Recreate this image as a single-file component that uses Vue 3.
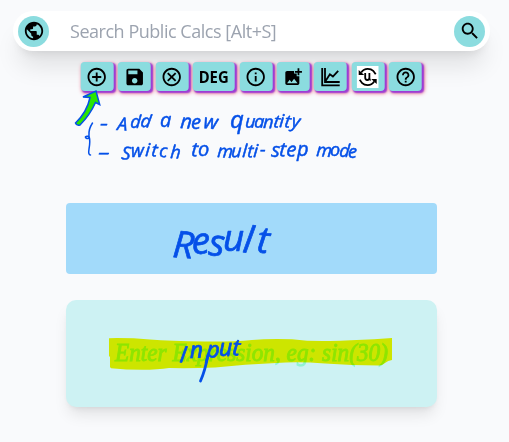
<script setup>
const circle = 'M12 2C6.48 2 2 6.48 2 12s4.48 10 10 10 10-4.48 10-10S17.52 2 12 2zm0 18c-4.41 0-8-3.59-8-8s3.59-8 8-8 8 3.59 8 8-3.59 8-8 8z'
const tools = [
  { name: 'add', path: 'M13 7h-2v4H7v2h4v4h2v-4h4v-2h-4z' + circle },
  { name: 'save', path: 'M17 3H5c-1.11 0-2 .9-2 2v14c0 1.1.89 2 2 2h14c1.1 0 2-.9 2-2V7l-4-4zm-5 16c-1.66 0-3-1.34-3-3s1.34-3 3-3 3 1.34 3 3-1.34 3-3 3zm3-10H5V5h10v4z' },
  { name: 'clear', path: 'M15.6 7L12 10.6 8.400 7 7 8.400l3.600 3.600L7 15.600 8.400 17l3.600-3.600 3.600 3.600 1.400-1.400-3.600-3.600L17 8.400z' + circle },
  { name: 'deg', label: 'DEG' },
  { name: 'info', path: 'M11 7h2v2h-2zm0 4h2v6h-2z' + circle },
  { name: 'image', path: 'M19 7v2.99s-1.99.01-2 0V7h-3s.01-1.99 0-2h3V2h2v3h3v2h-3zm-3 4V8h-3V5H5c-1.1 0-2 .9-2 2v12c0 1.1.9 2 2 2h12c1.1 0 2-.9 2-2v-8h-3zM5 19l3-4 2 3 3-4 4 5H5z' },
  { name: 'chart' },
  { name: 'unit' },
  { name: 'help', path: 'M11 16h2v2h-2zM12 6c-2.21 0-4 1.79-4 4h2c0-1.1.9-2 2-2s2 .9 2 2c0 2-3 1.75-3 5h2c0-2.25 3-2.5 3-5 0-2.21-1.79-4-4-4z' + circle }
]
</script>

<template>
  <main class="page">
    <header class="search">
      <button class="round">
        <svg width="22" height="22" viewBox="0 0 24 24"><path d="M12 2C6.48 2 2 6.48 2 12s4.48 10 10 10 10-4.48 10-10S17.52 2 12 2zm-1 17.93c-3.95-.49-7-3.85-7-7.93 0-.62.08-1.21.21-1.79L9 15v1c0 1.1.9 2 2 2v1.93zm6.9-2.54c-.26-.81-1-1.39-1.9-1.39h-1v-3c0-.55-.45-1-1-1H8v-2h2c.55 0 1-.45 1-1V7h2c1.1 0 2-.9 2-2v-.41c2.93 1.19 5 4.06 5 7.41 0 2.08-.8 3.97-2.1 5.39z" /></svg>
      </button>
      <span class="placeholder">Search Public Calcs [Alt+S]</span>
      <button class="round">
        <svg width="22" height="22" viewBox="0 0 24 24"><path d="M15.5 14h-.79l-.28-.27C15.41 12.59 16 11.11 16 9.5 16 5.91 13.09 3 9.5 3S3 5.91 3 9.5 5.91 16 9.5 16c1.61 0 3.09-.59 4.23-1.57l.27.28v.79l5 4.99L20.49 19l-4.99-5zm-6 0C7.01 14 5 11.99 5 9.5S7.01 5 9.5 5 14 7.01 14 9.5 11.99 14 9.5 14z" /></svg>
      </button>
    </header>

    <nav class="tools">
      <button v-for="t in tools" :key="t.name" class="tool" :class="t.name">
        <svg v-if="t.label" width="36" height="22" viewBox="0 0 36 22"><text x="3" y="17" textLength="30" lengthAdjust="spacingAndGlyphs">{{ t.label }}</text></svg>
        <svg v-else-if="t.name === 'chart'" width="22" height="22" viewBox="0 0 22 22" class="line">
          <path d="M2.500 2v17.300H20M5.300 2v14H20M5.500 15.500l4.700-7.200 3 2.200 5.300-5.700" />
        </svg>
        <svg v-else-if="t.name === 'unit'" width="22" height="22" viewBox="0 0 22 22" class="line">
          <rect width="22" height="22" class="tile" />
          <path d="M4.500 6.500Q7 2.800 11 2.800q3.600 0 5.500 2l2.500 3.500M17.500 15.500Q15 19.200 11 19.200q-3.600 0-5.500-2L3 13.700M8.500 7v4.500q0 2.500 2.100 2.500t2.100-2.500V7M12.700 12q.2 2 1.300 2" />
          <path d="M2 4v5h5.500zM20 18v-5h-5.500z" class="head" />
        </svg>
        <svg v-else width="22" height="22" viewBox="0 0 24 24"><path :d="t.path" /></svg>
      </button>
    </nav>

    <section class="result"></section>
    <section class="input"><span class="hint">
      <svg width="320" height="70" viewBox="0 0 320 70"><text x="23" y="41.500" textLength="273" lengthAdjust="spacingAndGlyphs">Enter Expression, eg: sin(30)</text></svg>
    </span></section>

    <svg class="ink marker" width="509" height="442" viewBox="0 0 509 442">
      <path d="M109 338.200Q130 337.800 150 339.500T205 341.500Q235 341.700 252 340T292 339.200Q310 341.500 330 341T374 339.200L392 338V360Q388 360.500 385 363T379 365.500Q352 365.500 325 363.500T276 363Q245 364 215 367.500Q190 368.500 169 368Q158 369.800 142 369.800T111 368.300L110 367V357L109 356Z" />
    </svg>
    <svg class="ink notes" width="509" height="442" viewBox="0 0 509 442">
      <path class="arrow" d="M75.500 123Q76.500 126 80 125Q90 115 95.500 102.500L99.700 104.500L96 91L83 97L90 97.500Q87 112 75.500 123Z" />
      <path class="stroke" d="M92.500 123Q88.500 129 89 135Q89.500 140 86 138Q84 136 89 136Q90.500 141 89 149Q88 155 90.500 155" />
      <g class="small">
        <text x="100" y="130" textLength="8" lengthAdjust="spacingAndGlyphs">-</text>
        <text x="117 130 140" y="130 127.500 126.500" rotate="4 4 8">Add</text>
        <text class="wide" x="160" y="127">a</text>
        <text class="wide" x="180 191 203" y="128 128.500 128" rotate="4 0 6">new</text>
        <text class="tall" x="230" y="128">q</text>
        <text x="245 254 263 273 279 284 291" y="127.500 127.500 128 127 127 127 127" rotate="2 2 2 8 4 8 8">uantity</text>
        <text x="98" y="159" textLength="12" lengthAdjust="spacingAndGlyphs">-</text>
        <text x="121 131 145 151 159 170" y="159 157 156 156 157 158" rotate="6 0 4 6 2 4">Switch</text>
        <text class="wide" x="191 198" y="156" rotate="4 0">to</text>
        <text x="217 231 242 247 253 260" y="157 157 157 157 157 156" rotate="4 2 4 4 4 0">multi-</text>
        <text class="wide" x="271 279 286 297" y="156.500 156 156 156" rotate="4 4 4 0">step</text>
        <text x="316 330 339 348" y="156 156 156.500 158" rotate="4 0 4 0">mode</text>
      </g>
      <text class="big" x="172 192 208 223 242 256" y="257 254 255 251 252 252" rotate="4 -2 5 0 8 6">Result</text>
      <text class="mid" x="179 190 206 219 232" y="362 358 357 356 355" rotate="8 -2 4 0 4">Input</text>
      <path class="stroke tail" d="M208 355Q205 371 200.500 381" />
    </svg>
  </main>
</template>

<style>
body { margin: 0; background: #f9fafc; }
</style>
<style scoped>
.page { box-sizing: border-box; position: relative; width: 509px; height: 442px; padding: 11px 19px 0 13px; overflow: hidden; background: #f9fafc; font-family: "Noto Sans", "Open Sans", sans-serif; }
.search { box-sizing: border-box; display: flex; align-items: center; height: 40px; padding: 0 5px; border-radius: 20px; background: #fff; box-shadow: 0 20px 25px -5px rgba(0,0,0,.1), 0 8px 10px -6px rgba(0,0,0,.1); }
button { padding: 0; border: 0; color: #000; font-family: inherit; }
.round { display: grid; place-items: center; width: 31px; height: 31px; border-radius: 50%; background: #8bdcdf; }
.placeholder { flex: 1; padding-left: 21px; color: #9ca3af; font-family: "Open Sans", sans-serif; font-size: 18px; line-height: 26px; letter-spacing: -.47px; white-space: nowrap; }
.tools { display: flex; justify-content: center; gap: 4.400px; margin: 11px 0 0 0; transform: translateX(-.3px); }
.tool { display: grid; place-items: center; width: 33px; height: 29px; border-radius: 4px; background: #8bdcdf; box-shadow: 1.500px 1.500px 1.500px #9b3cd6, 2px 2px 4px #ee5a78; }
.deg { width: 42px; }
.deg text { font-size: 16px; font-weight: 700; }
.image svg { width: 21px; }
.line { fill: none; stroke: #000; stroke-width: 1.800; }
.tile { fill: #fff; stroke: none; }
.head { fill: #000; stroke: none; }
.result { width: 371px; height: 71px; margin: 112px 0 0 53px; border-radius: 4px; background: #a2dafa; }
.input { display: grid; place-items: center; width: 371px; height: 107px; margin: 26px 0 0 53px; border-radius: 10px; background: #cdf2f3; box-shadow: 0 10px 15px -3px rgba(0,0,0,.1), 0 4px 6px -4px rgba(0,0,0,.1); }
.hint { display: flex; }
.hint text { fill: #8ff2d0; stroke: #8ff2d0; stroke-width: .9; font: italic 400 25px "Liberation Serif", serif; }
.ink { position: absolute; left: 0; top: 0; pointer-events: none; }
.marker { mix-blend-mode: multiply; fill: #fff200; }
.notes text { fill: #0550e8; stroke: #0550e8; stroke-width: .5; stroke-linejoin: round; font-family: "Open Sans", sans-serif; font-style: italic; }
.small text { font-size: 18px; }
.small .wide { font-size: 20px; }
.small .tall { font-size: 24px; }
.notes .big { font-size: 37px; stroke-width: .7; }
.notes .mid { font-size: 23px; stroke-width: .8; }
.arrow { fill: #2be500; stroke: #0550e8; stroke-width: 1.500; }
.stroke { fill: none; stroke: #0550e8; stroke-width: 1.500; stroke-linecap: round; }
.tail { stroke-width: 2.800; }
</style>
